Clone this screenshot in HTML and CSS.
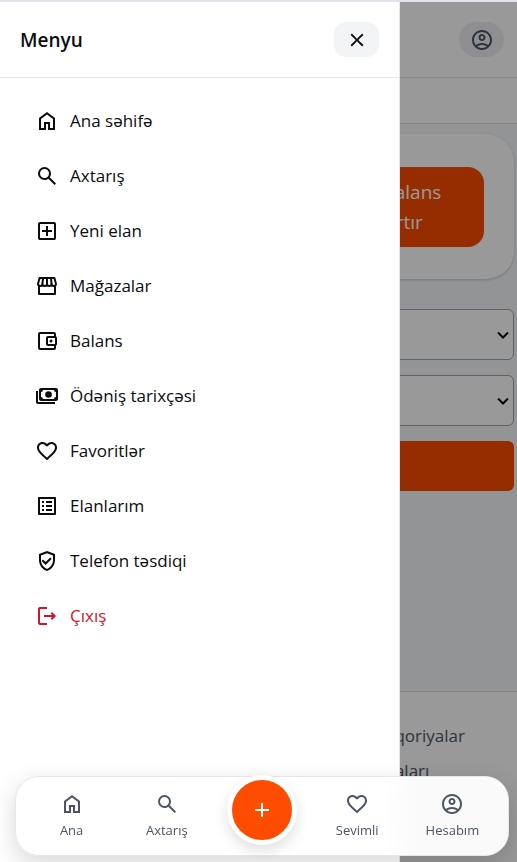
FILE: index.html
```html
<!DOCTYPE html>
<html lang="az">
<head>
<meta charset="utf-8">
<meta name="viewport" content="width=device-width, initial-scale=1">
<title>Menyu</title>
<link rel="stylesheet" href="styles.css">
</head>
<body>
<svg class="sprite" aria-hidden="true">
  <symbol id="home" viewBox="0 -960 960 960"><path d="M240-200h120v-240h240v240h120v-360L480-740 240-560v360Zm-80 80v-480l320-240 320 240v480H520v-240h-80v240H160Z"/></symbol>
  <symbol id="search" viewBox="0 -960 960 960"><path d="M784-120 532-372q-30 24-69 38t-83 14q-109 0-184.500-75.500T120-580q0-109 75.500-184.500T380-840q109 0 184.500 75.500T640-580q0 44-14 83t-38 69l252 252-56 56ZM380-400q75 0 127.500-52.500T560-580q0-75-52.500-127.500T380-760q-75 0-127.500 52.500T200-580q0 75 52.500 127.500T380-400Z"/></symbol>
  <symbol id="add-box" viewBox="0 -960 960 960"><path d="M440-280h80v-160h160v-80H520v-160h-80v160H280v80h160v160ZM200-120q-33 0-56.500-23.500T120-200v-560q0-33 23.500-56.500T200-840h560q33 0 56.500 23.500T840-760v560q0 33-23.500 56.500T760-120H200Zm0-80h560v-560H200v560Z"/></symbol>
  <symbol id="store" viewBox="0 0 24 24"><g fill="none" stroke="currentColor" stroke-width="2" stroke-linejoin="round"><path d="M4 11.500V20h16v-8.500"/><path d="M4.600 4h14.800l1.500 5.400c.4 1.500-.7 2.600-2 2.600-1.300 0-2.300-1-2.300-2.300C16.600 11 15.600 12 14.300 12S12 11 12 9.700C12 11 11 12 9.700 12S7.400 11 7.400 9.700C7.400 11 6.400 12 5.100 12c-1.300 0-2.400-1.100-2-2.600Z"/><path d="M7.400 9.700 8.100 4M12 9.700V4M16.600 9.700 15.900 4"/></g></symbol>
  <symbol id="wallet" viewBox="0 0 24 24"><path d="M21 7.280V5c0-1.100-.9-2-2-2H5a2 2 0 0 0-2 2v14c0 1.100.9 2 2 2h14c1.100 0 2-.9 2-2v-2.280A2 2 0 0 0 22 15V9a2 2 0 0 0-1-1.720ZM20 9v6h-7V9h7ZM5 19V5h14v2h-6c-1.100 0-2 .9-2 2v6c0 1.100.9 2 2 2h6v2H5Z"/><circle cx="16" cy="12" r="1.500"/></symbol>
  <symbol id="payments" viewBox="0 0 24 24"><path fill-rule="evenodd" d="M6 4h15c1.100 0 2 .9 2 2v9c0 1.100-.9 2-2 2H6c-1.100 0-2-.9-2-2V6c0-1.100.9-2 2-2Zm2 2a2 2 0 0 1-2 2v5a2 2 0 0 1 2 2h11a2 2 0 0 1 2-2V8a2 2 0 0 1-2-2H8Z"/><circle cx="13.500" cy="10.500" r="3.300"/><path d="M1 7h2v11h17v2H3c-1.100 0-2-.9-2-2V7Z"/></symbol>
  <symbol id="heart" viewBox="0 0 24 24"><path d="M16.500 3c-1.740 0-3.410.81-4.500 2.090C10.910 3.810 9.240 3 7.500 3 4.420 3 2 5.420 2 8.500c0 3.780 3.400 6.860 8.550 11.540L12 21.350l1.450-1.320C18.600 15.360 22 12.280 22 8.500 22 5.420 19.580 3 16.500 3zm-4.400 15.550-.1.100-.1-.1C7.140 14.240 4 11.390 4 8.500 4 6.500 5.500 5 7.500 5c1.540 0 3.040.99 3.570 2.360h1.870C13.460 5.990 14.960 5 16.500 5c2 0 3.500 1.500 3.500 3.500 0 2.890-3.140 5.740-7.900 10.050z"/></symbol>
  <symbol id="list" viewBox="0 0 24 24"><path d="M11 7h6v2h-6zm0 4h6v2h-6zm0 4h6v2h-6zM7 7h2v2H7zm0 4h2v2H7zm0 4h2v2H7zM20 3H4c-.6 0-1 .4-1 1v16c0 .5.500 1 1 1h16c.5 0 1-.5 1-1V4c0-.6-.5-1-1-1zm-1 16H5V5h14v14z"/></symbol>
  <symbol id="shield" viewBox="0 0 24 24"><path d="M12 2 4 5v6.090c0 5.050 3.410 9.760 8 10.910 4.590-1.150 8-5.860 8-10.910V5l-8-3zm6 9.090c0 4-2.550 7.700-6 8.830-3.450-1.130-6-4.820-6-8.830v-4.700l6-2.250 6 2.250v4.700zM8 10.500l-1.400 1.400 4 4 6-6-1.400-1.400-4.600 4.600z"/></symbol>
  <symbol id="logout" viewBox="0 0 24 24"><path d="M17 8l-1.400 1.400 1.600 1.600H9v2h8.200l-1.600 1.600L17 16l4-4-4-4zM5 5h7V3H5c-1.100 0-2 .9-2 2v14c0 1.100.9 2 2 2h7v-2H5V5z"/></symbol>
  <symbol id="account" viewBox="0 0 24 24"><path d="M12 2C6.480 2 2 6.480 2 12s4.480 10 10 10 10-4.480 10-10S17.520 2 12 2zM7.350 18.500C8.660 17.560 10.260 17 12 17s3.340.56 4.650 1.500C15.340 19.440 13.740 20 12 20s-3.340-.56-4.650-1.500zm10.790-1.380C16.450 15.800 14.320 15 12 15s-4.450.8-6.140 2.120C4.700 15.730 4 13.950 4 12c0-4.420 3.580-8 8-8s8 3.580 8 8c0 1.950-.7 3.730-1.860 5.120z"/><path d="M12 6c-1.930 0-3.500 1.570-3.500 3.500S10.070 13 12 13s3.500-1.570 3.500-3.500S13.930 6 12 6zm0 5c-.83 0-1.500-.67-1.500-1.500S11.170 8 12 8s1.500.67 1.500 1.500S12.830 11 12 11z"/></symbol>
  <symbol id="close" viewBox="0 0 24 24"><path d="M19 6.410 17.590 5 12 10.590 6.410 5 5 6.410 10.590 12 5 17.590 6.410 19 12 13.410 17.590 19 19 17.590 13.410 12z"/></symbol>
  <symbol id="plus" viewBox="0 0 24 24"><path d="M19 13h-6v6h-2v-6H5v-2h6V5h2v6h6v2z"/></symbol>
  <symbol id="chevron" viewBox="0 0 14 14"><path d="m2 4.500 5 5 5-5" fill="none" stroke="currentColor" stroke-width="2"/></symbol>
</svg>

<div class="page">
  <header class="topbar">
    <button class="pill pill-round" type="button" aria-label="Hesabım"><svg class="icon"><use href="#account"/></svg></button>
  </header>
  <div class="subbar"></div>
  <main class="content">
    <section class="card">
      <button class="balance" type="button">+ Balans<br>artır</button>
    </section>
    <form class="filters">
      <div class="field"><select aria-label="Kateqoriya"></select><svg class="chevron"><use href="#chevron"/></svg></div>
      <div class="field"><select aria-label="Status"></select><svg class="chevron"><use href="#chevron"/></svg></div>
      <button class="submit" type="button" aria-label="Axtar"></button>
    </form>
  </main>
  <footer class="footer">
    <a href="#">Kateqoriyalar</a>
    <a href="#">Modaları</a>
  </footer>
</div>

<div class="overlay"></div>

<aside class="drawer">
  <div class="drawer-head">
    <h2>Menyu</h2>
    <button class="pill" type="button" aria-label="Bağla"><svg class="icon icon-small"><use href="#close"/></svg></button>
  </div>
  <nav class="menu">
    <a href="#"><svg class="icon"><use href="#home"/></svg>Ana səhifə</a>
    <a href="#"><svg class="icon"><use href="#search"/></svg>Axtarış</a>
    <a href="#"><svg class="icon"><use href="#add-box"/></svg>Yeni elan</a>
    <a href="#"><svg class="icon"><use href="#store"/></svg>Mağazalar</a>
    <a href="#"><svg class="icon"><use href="#wallet"/></svg>Balans</a>
    <a href="#"><svg class="icon"><use href="#payments"/></svg>Ödəniş tarixçəsi</a>
    <a href="#"><svg class="icon"><use href="#heart"/></svg>Favoritlər</a>
    <a href="#"><svg class="icon"><use href="#list"/></svg>Elanlarım</a>
    <a href="#"><svg class="icon"><use href="#shield"/></svg>Telefon təsdiqi</a>
    <a class="danger" href="#"><svg class="icon"><use href="#logout"/></svg>Çıxış</a>
  </nav>
</aside>

<nav class="tabbar">
  <a href="#"><svg class="icon"><use href="#home"/></svg>Ana</a>
  <a href="#"><svg class="icon"><use href="#search"/></svg>Axtarış</a>
  <button class="add" type="button" aria-label="Yeni elan"><svg class="icon"><use href="#plus"/></svg></button>
  <a href="#"><svg class="icon"><use href="#heart"/></svg>Sevimli</a>
  <a href="#"><svg class="icon"><use href="#account"/></svg>Hesabım</a>
</nav>
</body>
</html>
```
FILE: styles.css
```css
* { box-sizing: border-box; }

body {
  margin: 0;
  overflow: hidden;
  font-family: "Segoe UI", "Open Sans", "Noto Sans", sans-serif;
  font-size: 17px;
  color: #0b0c10;
}

a { color: inherit; text-decoration: none; }
button { border: 0; padding: 0; font: inherit; color: inherit; cursor: pointer; }

.sprite { position: absolute; width: 0; height: 0; }
.icon { width: 24px; height: 24px; flex: none; fill: currentColor; }
.icon-small { width: 22px; height: 22px; }

.page {
  display: flex;
  flex-direction: column;
  height: 100vh;
  overflow: hidden;
  border-top: 2px solid #e1e2ea;
  background: #f5f7fa;
}

.topbar {
  display: flex;
  justify-content: flex-end;
  padding: 20px 13px;
  background: #fff;
  border-bottom: 1px solid #e5e7eb;
}

.pill {
  display: flex;
  align-items: center;
  justify-content: center;
  width: 45px;
  height: 35px;
  border-radius: 12px;
  background: #f3f4f6;
}
.pill-round { border-radius: 18px; background: #eeeff3; color: #4b5563; }

.subbar { flex: none; height: 46px; background: #fff; border-bottom: 1px solid #dcdfe4; }

.content { flex: none; padding: 10px 3px 200px; }

.card {
  display: flex;
  justify-content: flex-end;
  padding: 33px 30px 32px;
  border-radius: 28px;
  background: #fff;
  box-shadow: 0 1px 3px rgba(0, 0, 0, .2);
}

.balance {
  width: 160px;
  height: 80px;
  border-radius: 16px;
  background: #fa4b00;
  color: #fff;
  font-size: 19px;
  font-weight: 500;
  line-height: 30px;
}

.filters { display: grid; gap: 15px; margin-top: 30px; }
.field { display: grid; align-items: center; }
.field > * { grid-area: 1 / 1; }
.field select {
  appearance: none;
  width: 100%;
  height: 51px;
  border: 1px solid #a0a3ac;
  border-radius: 6px;
  background: #fff;
}
.chevron { justify-self: end; width: 14px; height: 14px; margin-right: 4px; pointer-events: none; }
.submit { height: 50px; border-radius: 6px; background: #fa4b00; }

.footer {
  display: flex;
  flex: 1;
  flex-direction: column;
  padding: 26px 0 0 359px;
  border-top: 1px solid #dcdfe4;
  background: #fff;
  color: #4b5563;
  line-height: 35px;
}

.overlay {
  position: fixed;
  inset: 2px 0 0;
  background: rgba(0, 0, 0, .4);
}

.drawer {
  position: fixed;
  top: 2px;
  bottom: 0;
  left: 0;
  width: 400px;
  max-width: 90%;
  border-right: 1px solid #e5e7eb;
  background: #fff;
}

.drawer-head {
  display: flex;
  align-items: center;
  justify-content: space-between;
  padding: 20px;
  border-bottom: 1px solid #e5e7eb;
}
.drawer-head h2 { margin: 0; font-size: 19px; font-weight: 600; line-height: 28px; }

.menu { padding: 15px 20px; }
.menu a {
  display: flex;
  align-items: center;
  gap: 11px;
  height: 55px;
  padding: 0 15px;
}
.menu .danger { color: #d0142c; }

.tabbar {
  position: fixed;
  right: 8px;
  bottom: 6px;
  left: 15px;
  display: grid;
  grid-template-columns: repeat(5, 1fr);
  align-items: center;
  justify-items: center;
  padding: 15px 8px;
  border: 1px solid #e5e7eb;
  border-radius: 24px;
  background: rgba(255, 255, 255, .95);
  backdrop-filter: blur(14px);
  box-shadow: 0 8px 24px rgba(0, 0, 0, .16);
  color: #4b5563;
  font-size: 13px;
  line-height: 20px;
}
.tabbar a { display: flex; flex-direction: column; align-items: center; gap: 4px; }

.add {
  display: flex;
  align-items: center;
  justify-content: center;
  width: 70px;
  height: 70px;
  margin: -17px 0 -5px;
  border: 5px solid #fff;
  border-radius: 50%;
  background: #ff4d00;
  color: #fff;
  box-shadow: 0 6px 14px rgba(0, 0, 0, .12);
}
```
